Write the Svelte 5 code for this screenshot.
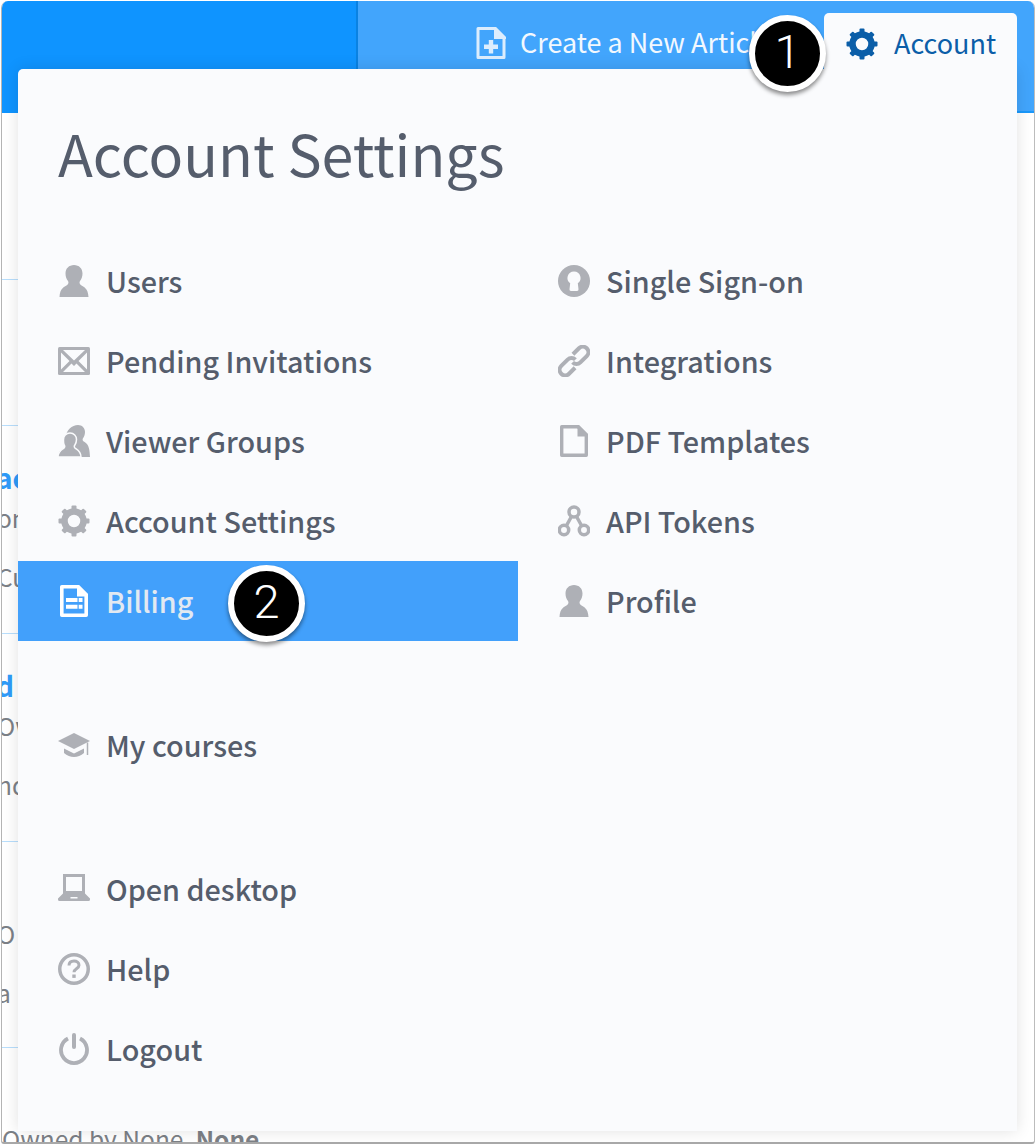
<script lang="ts">
	type Row = { height: number; title?: string; lines?: string[]; owner?: boolean }

	const rows: Row[] = [
		{ height: 167 },
		{ height: 146 },
		{ height: 208, title: 'ac', lines: ['on', 'Cu'] },
		{ height: 208, title: 'd', lines: ['Ow', 'nd'] },
		{ height: 206, title: ' ', lines: ['O', 'a'] },
		{ height: 95, title: ' ', owner: true }
	]

	const accountLeft = [
		{ label: 'Users', icon: 'user' },
		{ label: 'Pending Invitations', icon: 'mail' },
		{ label: 'Viewer Groups', icon: 'group' },
		{ label: 'Account Settings', icon: 'gear' },
		{ label: 'Billing', icon: 'billing', active: true }
	]
	const accountRight = [
		{ label: 'Single Sign-on', icon: 'key' },
		{ label: 'Integrations', icon: 'link' },
		{ label: 'PDF Templates', icon: 'file' },
		{ label: 'API Tokens', icon: 'api' },
		{ label: 'Profile', icon: 'user' }
	]
	const bottom = [
		{ label: 'Open desktop', icon: 'laptop' },
		{ label: 'Help', icon: 'help' },
		{ label: 'Logout', icon: 'power' }
	]

	const teeth = [0, 45, 90, 135, 180, 225, 270, 315]
	const userPath = 'M16 0c5 0 8.500 3.500 8.500 8.500 0 3-1 5.500-2.500 7.500-.8 1.200-.6 3 .8 4 3 2 7.200 3 7.700 12H1.500c.5-9 4.700-10 7.700-12 1.400-1 1.600-2.800.8-4C8.500 14 7.500 11.500 7.500 8.500 7.500 3.500 11 0 16 0z'
</script>

{#snippet gear()}
	<circle cx="16" cy="16" r="9.500" fill="none" stroke="currentColor" stroke-width="6.500" />
	{#each teeth as angle}
		<rect x="13.500" y="0.500" width="5" height="6" rx="1" fill="currentColor" transform="rotate({angle} 16 16)" />
	{/each}
{/snippet}

{#snippet icon(name: string)}
	<svg class="icon" viewBox="0 0 32 32" aria-hidden="true">
		{#if name === 'user'}
			<path d={userPath} fill="currentColor" />
		{:else if name === 'mail'}
			<rect x="0" y="2" width="32" height="28" rx="1.500" fill="currentColor" />
			<path d="M5 5h22L16 15.500zM3 7.500v17l8.500-8.500zM29 7.500v17L20.500 16zM5 27l8.500-8.500L16 21l2.500-2.500L27 27z" fill="#fafbfd" />
		{:else if name === 'group'}
			<path d="M20 0c4 0 7 2.800 7 7 0 2.500-.8 4.700-2 6.300-.7 1-.5 2.500.7 3.300 2.500 1.700 6 2.500 6.300 15.400H8V12C8 5 14 0 20 0z" fill="currentColor" />
			<path d="M12 8c4 0 6.500 3 6.500 6.500 0 2.400-.8 4.300-1.800 5.800-.7 1-.5 2.300.6 3 2.200 1.500 5.400 2.500 5.700 8.700H0c.3-6.200 3.500-7.200 5.700-8.700 1.100-.7 1.300-2 .6-3C5.300 18.800 5.500 16.900 5.500 14.500 5.500 11 8 8 12 8z" fill="currentColor" stroke="#fafbfd" stroke-width="1.500" />
		{:else if name === 'gear'}
			{@render gear()}
		{:else if name === 'billing'}
			<path d="M3.800 1.800H20L28.200 10v20.200H3.800z" fill="none" stroke="currentColor" stroke-width="3.600" stroke-linejoin="round" />
			<path d="M19 0h2l9 9v2.500H19z" fill="currentColor" />
			<path d="M8 13h11.500v4H8zM20.700 13H24.500v4h-3.800zM8 19.800h11.500v4H8zM20.700 19.800H24.500v4h-3.800z" fill="currentColor" />
		{:else if name === 'key'}
			<circle cx="16" cy="16" r="16" fill="currentColor" />
			<path d="M16 6.500a6.500 6.500 0 0 1 3.800 11.800l.7 6a1.500 1.500 0 0 1-1.500 1.700h-6a1.500 1.500 0 0 1-1.500-1.700l.7-6A6.500 6.500 0 0 1 16 6.500z" fill="#fafbfd" />
		{:else if name === 'link'}
			<g fill="none" stroke="currentColor" stroke-width="4" transform="rotate(-45 16 16)">
				<path d="M18 16a5.500 5.500 0 0 0-5.500-5.500H3.500a5.500 5.500 0 0 0 0 11H12" />
				<path d="M14 16a5.500 5.500 0 0 0 5.500 5.500h9a5.500 5.500 0 0 0 0-11H20" />
			</g>
		{:else if name === 'file'}
			<path d="M3.700 1.700H20L28.300 10v20.300H3.700z" fill="none" stroke="currentColor" stroke-width="3.400" stroke-linejoin="round" />
			<path d="M19.500 0H21l9 9v2.500H19.500z" fill="currentColor" />
		{:else if name === 'api'}
			<g fill="none" stroke="currentColor" stroke-width="3.500">
				<circle cx="16" cy="7" r="5" />
				<circle cx="6" cy="25" r="4.700" />
				<circle cx="26" cy="25" r="4.700" />
				<path d="M13.500 11.500l-5 9M18.500 11.500l5 9" />
			</g>
		{:else if name === 'cap'}
			<path d="M16 4L0 12l16 8 16-8z" fill="currentColor" />
			<path d="M6 19.500v4.500c3 2.500 6.500 4 10 4s7-1.500 10-4v-4.500l-10 5z" fill="currentColor" />
			<path d="M29.500 13.500V26" stroke="currentColor" stroke-width="1.500" />
		{:else if name === 'laptop'}
			<rect x="6.500" y="2.500" width="19" height="17" fill="none" stroke="currentColor" stroke-width="3" />
			<path d="M5 20.500h22l5 5v1a1.500 1.500 0 0 1-1.500 1.500h-29A1.500 1.500 0 0 1 0 26.500v-1z" fill="currentColor" />
			<rect x="12.500" y="24" width="7" height="1.500" fill="#fafbfd" />
		{:else if name === 'help'}
			<circle cx="16" cy="16" r="14.250" fill="none" stroke="currentColor" stroke-width="3.500" />
			<path d="M11 12.500c0-3 2.200-4.500 5-4.500s5 1.600 5 4.200c0 3.600-5 3.600-5 7" fill="none" stroke="currentColor" stroke-width="3" />
			<rect x="14.300" y="21.500" width="3.400" height="3.400" fill="currentColor" />
		{:else if name === 'power'}
			<path d="M10 5.500a13 13 0 1 0 12 0" fill="none" stroke="currentColor" stroke-width="3.800" />
			<rect x="14" y="0" width="4" height="16" rx="2" fill="currentColor" />
		{/if}
	</svg>
{/snippet}

{#snippet item(entry: { label: string; icon: string; active?: boolean })}
	<a class="item" class:active={entry.active} href="#top">
		{@render icon(entry.icon)}
		<span>{entry.label}</span>
	</a>
{/snippet}

<div class="frame">
	<header class="topbar">
		<div class="brand"></div>
		<div class="actions">
			<a class="create" href="#top">
				<svg class="create-icon" viewBox="0 0 30 32" aria-hidden="true">
					<path d="M2 1.500H19L28 10.500v20H2z" fill="none" stroke="#dcedfd" stroke-width="3" stroke-linejoin="round" />
					<path d="M18 0h2l10 10v2H18z" fill="#dcedfd" />
					<path d="M12.800 13h4.400v4.500h4.800v4.400h-4.800v4.600h-4.400v-4.600H8v-4.400h4.800z" fill="#dcedfd" />
				</svg>
				Create a New Article
			</a>
		</div>
	</header>

	<main class="articles">
		{#each rows as row}
			<section class="row" style="height: {row.height}px">
				{#if row.title}
					<div class="title">{row.title}</div>
				{/if}
				{#if row.lines}
					{#each row.lines as line}
						<div class="line">{line}</div>
					{/each}
				{/if}
				{#if row.owner}
					<div class="line owner">Owned by None, <strong>None</strong></div>
				{/if}
			</section>
		{/each}
	</main>

	<div class="account-tab">
		<svg class="tab-gear" viewBox="0 0 32 32" aria-hidden="true">{@render gear()}</svg>
		<span>Account</span>
	</div>

	<nav class="panel">
		<h1>Account Settings</h1>
		<div class="columns">
			<div class="column">
				{#each accountLeft as entry}
					{@render item(entry)}
				{/each}
			</div>
			<div class="column">
				{#each accountRight as entry}
					{@render item(entry)}
				{/each}
			</div>
		</div>
		<div class="column section">
			{@render item({ label: 'My courses', icon: 'cap' })}
		</div>
		<div class="column section">
			{#each bottom as entry}
				{@render item(entry)}
			{/each}
		</div>
	</nav>
</div>

<div class="badge one">1</div>
<div class="badge two">2</div>

<style>
	:global(html), :global(body) {
		margin: 0;
		height: 1146px;
		overflow: hidden;
		background: #fff;
	}

	.frame {
		position: relative;
		box-sizing: border-box;
		width: 1034px;
		height: 1143px;
		margin: 1px 0 0 1px;
		border-left: 1px solid #b4b4b4;
		border-right: 1px solid #bcbcbc;
		border-bottom: 2px solid #a8a8a8;
		border-radius: 7px 7px 3px 3px;
		overflow: hidden;
		background: #fff;
		font-family: "Noto Sans CJK SC", "Noto Sans", sans-serif;
	}

	.topbar {
		display: flex;
		height: 112px;
	}

	.brand {
		width: 354px;
		background: #0f94ff;
		border-right: 2px solid #0a82e2;
	}

	.actions {
		flex: 1;
		box-sizing: border-box;
		background: #42a5fc;
		border-bottom: 2px solid #1a98fb;
		padding: 23px 0 0 118px;
	}

	.create {
		display: flex;
		align-items: center;
		gap: 14px;
		color: #f2f8fe;
		font-size: 27px;
		font-weight: 400;
		line-height: 36px;
		text-decoration: none;
		white-space: nowrap;
	}

	.create-icon {
		width: 30px;
		height: 32px;
		flex: none;
		position: relative;
		top: 1px;
	}

	.articles {
		width: 900px;
		color: #7c8086;
		font-size: 24.500px;
	}

	.row {
		box-sizing: border-box;
		padding: 31px 0 0 0;
		border-bottom: 1px solid #b8defc;
		white-space: nowrap;
	}

	.title {
		height: 40px;
		margin-left: -6px;
		font-size: 28px;
		line-height: 40px;
		color: #2f9bf8;
		font-weight: 700;
		white-space: pre;
	}

	.line {
		height: 42px;
		margin-left: -5px;
		line-height: 42px;
	}

	.line + .line {
		margin-top: 17px;
	}

	.line.owner {
		margin: -1px 0 0 0;
	}

	.line strong {
		font-weight: 700;
	}

	.account-tab {
		position: absolute;
		top: 12px;
		left: 822px;
		width: 193px;
		height: 70px;
		box-sizing: border-box;
		padding: 15px 0 0 22px;
		display: flex;
		gap: 16px;
		border-radius: 5px 5px 0 0;
		background: #fafbfd;
		color: #0b5ea8;
		font-size: 27px;
		line-height: 30px;
		z-index: 2;
	}

	.tab-gear {
		width: 32px;
		height: 32px;
		flex: none;
	}

	.panel {
		position: absolute;
		top: 68px;
		left: 16px;
		width: 999px;
		height: 1062px;
		background: #fafbfd;
		border-radius: 5px 0 0 0;
		box-shadow: 0 0 16px rgba(0, 0, 0, 0.12);
		color: #555d6c;
		z-index: 1;
	}

	h1 {
		margin: 0;
		height: 172px;
		padding-left: 40px;
		font-size: 57.300px;
		font-weight: 400;
		line-height: 168px;
		white-space: nowrap;
	}

	.columns {
		display: grid;
		grid-template-columns: 500px 500px;
	}

	.section {
		width: 500px;
		margin-top: 64px;
	}

	.item {
		display: flex;
		align-items: center;
		gap: 16px;
		height: 80px;
		padding-left: 40px;
		color: inherit;
		font-size: 28.750px;
		font-weight: 500;
		text-decoration: none;
	}

	.item span {
		margin-bottom: 2px;
	}

	.icon {
		width: 32px;
		height: 32px;
		flex: none;
		color: #aeb0b6;
	}

	.item.active {
		background: #42a0fb;
		color: #e2e9f1;
	}

	.item.active .icon {
		color: #fff;
	}

	.badge {
		position: absolute;
		box-sizing: border-box;
		width: 77px;
		height: 77px;
		border: 6px solid #fff;
		border-radius: 50%;
		background: #000;
		box-shadow: 0 3px 4px rgba(0, 0, 0, 0.45);
		color: #fff;
		font-family: Roboto, "Liberation Sans", sans-serif;
		font-size: 47px;
		font-weight: 300;
		line-height: 62px;
		text-align: center;
		z-index: 3;
	}

	.one {
		top: 15px;
		left: 749px;
	}

	.two {
		top: 565px;
		left: 228px;
	}
</style>
